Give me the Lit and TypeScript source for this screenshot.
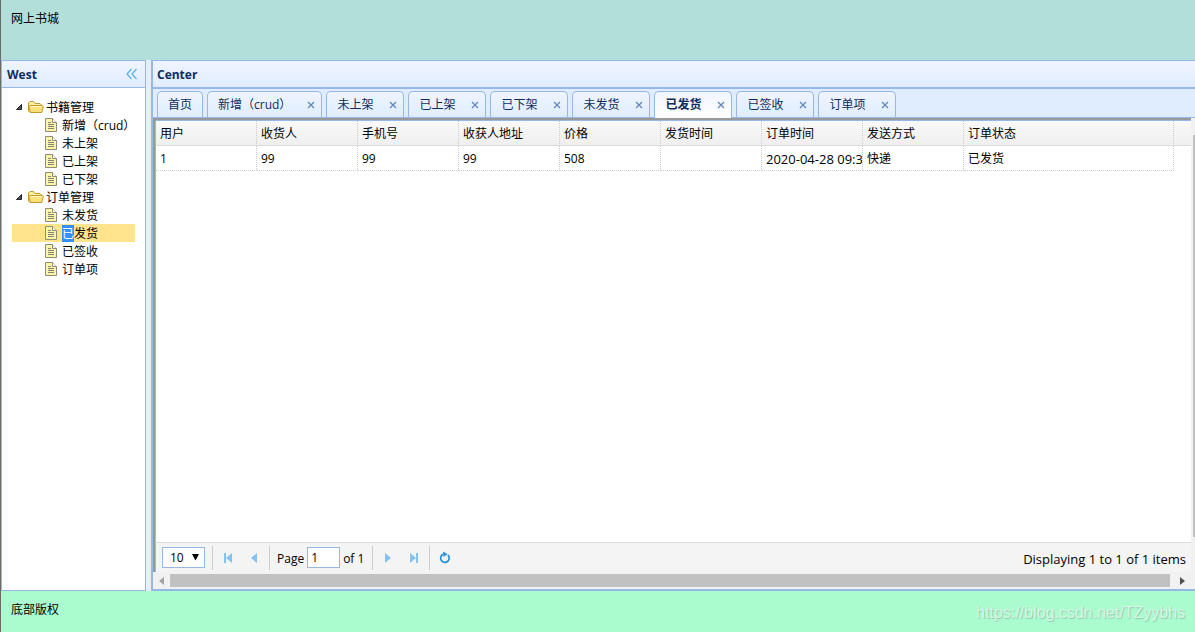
import { LitElement, html, svg, css, nothing } from "lit";
import { customElement, state } from "lit/decorators.js";

const books = ["新增（crud）", "未上架", "已上架", "已下架"];
const orders = ["未发货", "已发货", "已签收", "订单项"];
const tabs = ["首页", ...books, ...orders];
const columns = ["用户", "收货人", "手机号", "收获人地址", "价格", "发货时间", "订单时间", "发送方式", "订单状态"];
const rows = [["1", "99", "99", "99", "508", "", "2020-04-28 09:32", "快递", "已发货"]];
const dateColumn = 6;

const folderIcon = html`<svg class="folder" width="16" height="18" viewBox="0 0 16 18" aria-hidden="true">
  <path d="M.5 13V5L2 3.5H5.5L7 5.5H12L13.5 7V14.5H2Z" fill="#fdf0a0" stroke="#c39a2e"/>
  <path d="M2.5 14.5L.8 8.5L2 7.5H14.5L15.3 8.5L13.8 14.5Z" fill="#fbe07a" stroke="#c39a2e"/>
  <path d="M2.5 8.7H14" stroke="#fff8cc"/></svg>`;
const fileIcon = html`<svg class="file" width="16" height="18" viewBox="0 0 16 18" aria-hidden="true">
  <path d="M1.5 2.5H8.5L12.5 6.5V15.5H1.5Z" fill="#fdf7a4" stroke="#8c8c78"/>
  <path d="M8.5 2.5V6.5H12.5" fill="#fff" stroke="#8c8c78"/>
  <path d="M4 6.5H7M4 8.5H10M4 10.5H10M4 12.5H10" stroke="#85857a"/></svg>`;
const glyph = (shape: unknown) => html`<svg width="16" height="16" viewBox="0 0 16 16" aria-hidden="true">${shape}</svg>`;
const firstIcon = glyph(svg`<path d="M4 3H6V13H4ZM12 3V13L6 8Z" fill="#84c3ee"/>`);
const prevIcon = glyph(svg`<path d="M11 3V13L5 8Z" fill="#84c3ee"/>`);
const nextIcon = glyph(svg`<path d="M5 3V13L11 8Z" fill="#84c3ee"/>`);
const lastIcon = glyph(svg`<path d="M10 3H12V13H10ZM4 3V13L10 8Z" fill="#84c3ee"/>`);
const reloadIcon = glyph(svg`<path d="M10.8 4.8A4.3 4.3 0 1 1 6 4.2" fill="none" stroke="#2490d8" stroke-width="1.7"/><path d="M6 1.5L10.5 4L6.5 7Z" fill="#2490d8"/>`);

@customElement("app-root")
export class AppRoot extends LitElement {
  @state() private active = "已发货";

  static styles = css`
    :host {
      display: flex;
      flex-direction: column;
      box-sizing: border-box;
      min-height: 100vh;
      border-left: 1px solid #6b6b6b;
      background: #e6eef8;
      color: #000;
      font: 12px/18px "Open Sans", "Noto Sans CJK SC", sans-serif;
    }
    * { box-sizing: border-box; }
    button, select, input { font: inherit; color: inherit; margin: 0; padding: 0; border: 0; background: none; }
    .north { height: 60px; padding: 10px; background: #b3dfda; }
    .south { height: 41px; padding: 10px; background: #aafccf; display: flex; justify-content: space-between; }
    .mark { font: 16px/24px "Liberation Sans", Arial, sans-serif; color: #d9f5e6; text-shadow: 1px 1px 1px #8fc9ab; }
    .middle { flex: 1; display: flex; gap: 5px; }
    .west { width: 145px; display: flex; flex-direction: column; background: #fff; border: 1px solid #95b8e7; }
    .title { display: flex; align-items: center; justify-content: space-between; height: 27px; padding: 0 5px; background: linear-gradient(#eff5ff, #e0ecff); border-bottom: 1px solid #95b8e7; }
    .title h2 { margin: 0; padding-top: 2px; font-size: 12px; line-height: 18px; font-weight: 700; color: #0e2d5f; }
    .collapse { display: flex; }
    .tree, .tree ul { list-style: none; margin: 0; padding: 0; }
    .tree { padding: 10px; }
    .node { display: flex; align-items: center; height: 18px; line-height: 16px; width: 100%; white-space: nowrap; cursor: pointer; color: #000; text-decoration: none; }
    .label { padding-top: 2px; }
    .folder, .file { flex: none; margin-right: 2px; }
    .twist { flex: none; }
    .leaf { padding-left: 32px; }
    .on { background: #ffe48d; }
    .picked { background: #3390ff; color: #fff; }
    .center { flex: 1; min-width: 0; display: flex; flex-direction: column; background: #fff; border: solid #95b8e7; border-width: 1px 0 2px 2px; }
    .center .title { border-bottom-width: 2px; height: 28px; padding: 0 4px; }
    .tabs { display: flex; gap: 4px; height: 29px; padding: 2px 4px 0; background: #e0ecff; border-bottom: 1px solid #95b8e7; }
    .tab { display: flex; align-items: center; height: 26px; border: 1px solid #95b8e7; border-bottom: 0; border-radius: 5px 5px 0 0; background: linear-gradient(#eff5ff, #e0ecff); color: #0e2d5f; }
    .tab.current { height: 27px; background: linear-gradient(#eff5ff, #fff); font-weight: 700; }
    .name { padding: 0 10px; height: 100%; cursor: pointer; white-space: nowrap; }
    .close { display: flex; width: 20px; justify-content: center; cursor: pointer; }
    .work { flex: 1; display: flex; }
    .frame { flex: 1; min-width: 0; display: flex; flex-direction: column; }
    .view { flex: 1; display: flex; flex-direction: column; border: solid #999; border-width: 2px 0 0 2px; }
    .grid { flex: 1; border: solid #95b8e7; border-width: 1px 0 0 1px; }
    table { width: 100%; table-layout: fixed; border-collapse: separate; border-spacing: 0; }
    .col { width: 101px; }
    .wide { width: 210px; }
    th, td { height: 25px; padding: 2px 4px 0; font-weight: 400; text-align: left; white-space: nowrap; overflow: hidden; border: 0 dotted #ccc; border-right-width: 1px; }
    th { background: linear-gradient(#f9f9f9, #efefef); border-bottom: 1px solid #ddd; }
    td { border-bottom-width: 1px; }
    .date { padding-right: 0; font-size: 13px; }
    .rest { padding: 0; border-right: 0; }
    td.rest { border: 0; }
    .pager { display: flex; align-items: center; height: 30px; padding: 0 5px 0 6px; background: #f4f4f4; border-top: 1px solid #ddd; border-left: 1px solid #95b8e7; }
    .size { position: relative; display: flex; }
    .size select { width: 43px; height: 21px; padding-left: 7px; appearance: none; background: #fff; border: 1px solid #95b8e7; }
    .arrow { position: absolute; right: 6px; top: 7px; pointer-events: none; }
    .sep { width: 1px; height: 24px; margin: 0 7px; background: #ccc; }
    .icons { display: flex; gap: 10px; }
    .icons button { display: flex; }
    .jump { display: flex; align-items: center; gap: 3px; padding: 0 1px 0 0; }
    .jump input { width: 33px; height: 21px; padding: 0 3px; background: #fff; border: 1px solid #95b8e7; }
    .info { margin-left: auto; font-size: 13px; }
    .hbar { display: flex; align-items: center; justify-content: space-between; height: 17px; background: #f1f1f1; }
    .thumb { flex: 1; height: 13px; background: #c1c1c1; }
    .end { width: 17px; display: flex; justify-content: center; }
    .right { width: 21px; padding-left: 4px; }
    .vbar { width: 4px; padding: 17px 0 52px 2px; background: #f1f1f1; display: flex; }
    .vthumb { flex: 1; background: #c1c1c1; }
  `;

  private leaf(name: string) {
    const on = name === "已发货";
    return html`<li><a class="node leaf ${on ? "on" : ""}" href="#" @click=${(e: Event) => { e.preventDefault(); this.active = name; }}>
      ${fileIcon}<span class="label">${on ? html`<span class="picked">已</span>发货` : name}</span></a></li>`;
  }

  private branch(name: string, items: string[]) {
    return html`<li><div class="node"><svg class="twist" width="16" height="18" viewBox="0 0 16 18" aria-hidden="true"><path d="M9.5 6.5V11.5H4.5Z" fill="#555" stroke="#222"/></svg>${folderIcon}<span class="label">${name}</span></div>
      <ul>${items.map((i) => this.leaf(i))}</ul></li>`;
  }

  render() {
    return html`
      <header class="north">网上书城</header>
      <div class="middle">
        <nav class="west">
          <div class="title"><h2>West</h2>
            <button class="collapse" aria-label="Collapse"><svg width="16" height="16" viewBox="0 0 16 16"><path d="M7.5 3L3 8L7.5 13M12.5 3L8 8L12.5 13" fill="none" stroke="#5fb0ea" stroke-width="1.3"/></svg></button>
          </div>
          <ul class="tree">${this.branch("书籍管理", books)}${this.branch("订单管理", orders)}</ul>
        </nav>
        <main class="center">
          <div class="title"><h2>Center</h2></div>
          <div class="tabs">
            ${tabs.map((t, i) => html`<div class="tab ${t === this.active ? "current" : ""}">
              <button class="name" @click=${() => (this.active = t)}>${t}</button>
              ${i ? html`<button class="close" aria-label="Close ${t}"><svg width="8" height="8" viewBox="0 0 8 8"><path d="M1 1L7 7M7 1L1 7" stroke="#5f86bd" stroke-width="1.3"/></svg></button>` : nothing}
            </div>`)}
          </div>
          <div class="work">
            <div class="frame">
              <div class="view">
                <div class="grid">
                  <table>
                    <colgroup>${columns.map((_, i) => html`<col class=${i === 8 ? "wide" : "col"}>`)}<col></colgroup>
                    <thead><tr>${columns.map((c) => html`<th>${c}</th>`)}<th class="rest"></th></tr></thead>
                    <tbody>${rows.map((r) => html`<tr>${r.map((c, i) => html`<td class=${i === dateColumn ? "date" : ""}>${c}</td>`)}<td class="rest"></td></tr>`)}</tbody>
                  </table>
                </div>
                <div class="pager">
                  <div class="size"><select aria-label="Page size"><option>10</option><option>20</option></select>
                    <svg class="arrow" width="7" height="7" viewBox="0 0 7 7"><path d="M0 0H7L3.5 6.5Z" fill="#000"/></svg></div>
                  <span class="sep"></span>
                  <div class="icons"><button aria-label="First page">${firstIcon}</button><button aria-label="Previous page">${prevIcon}</button></div>
                  <span class="sep"></span>
                  <div class="jump"><label class="label" for="page">Page</label><input id="page" value="1"><span class="label">of 1</span></div>
                  <span class="sep"></span>
                  <div class="icons"><button aria-label="Next page">${nextIcon}</button><button aria-label="Last page">${lastIcon}</button></div>
                  <span class="sep"></span>
                  <div class="icons"><button aria-label="Reload">${reloadIcon}</button></div>
                  <span class="info label">Displaying 1 to 1 of 1 items</span>
                </div>
              </div>
              <div class="hbar">
                <span class="end"><svg width="5" height="8" viewBox="0 0 5 8"><path d="M5 0V8L0 4Z" fill="#a3a3a3"/></svg></span>
                <span class="thumb"></span>
                <span class="end right"><svg width="5" height="8" viewBox="0 0 5 8"><path d="M0 0V8L5 4Z" fill="#505050"/></svg></span>
              </div>
            </div>
            <div class="vbar"><span class="vthumb"></span></div>
          </div>
        </main>
      </div>
      <footer class="south"><span>底部版权</span><span class="mark">https://blog.csdn.net/TZyybhs</span></footer>`;
  }
}
